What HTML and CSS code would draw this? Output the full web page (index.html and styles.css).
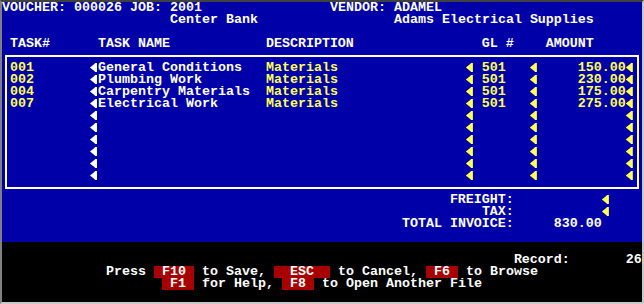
FILE: index.html
```html
<html lang="en">
  <head>
    <meta charset="UTF-8" />
    <title>Voucher Entry</title>
    <link rel="stylesheet" href="styles.css">
  </head>

  <body>
    <div class="screen">
      <div class="main">
        <div class="head">
          <div>VOUCHER: 000026 JOB: 2001</div>
          <div>VENDOR: ADAMEL</div>
          <div class="job">Center Bank</div>
          <div class="vendor">Adams Electrical Supplies</div>
        </div>

        <div class="cols hdr">
          <span>TASK#</span><span></span><span>TASK NAME</span><span>DESCRIPTION</span>
          <span></span><span class="gl">GL #</span><span></span><span class="amt">AMOUNT</span><span></span>
        </div>

        <div class="box">
          <div class="cols">
            <span class="y">001</span><i class="arr"></i><span>General Conditions</span><span class="y">Materials</span>
            <i class="arr y"></i><span class="gl y">501</span><i class="arr y"></i><span class="amt y">150.00</span><i class="arr y"></i>
          </div>
          <div class="cols">
            <span class="y">002</span><i class="arr"></i><span>Plumbing Work</span><span class="y">Materials</span>
            <i class="arr y"></i><span class="gl y">501</span><i class="arr y"></i><span class="amt y">230.00</span><i class="arr y"></i>
          </div>
          <div class="cols">
            <span class="y">004</span><i class="arr"></i><span>Carpentry Materials</span><span class="y">Materials</span>
            <i class="arr y"></i><span class="gl y">501</span><i class="arr y"></i><span class="amt y">175.00</span><i class="arr y"></i>
          </div>
          <div class="cols">
            <span class="y">007</span><i class="arr"></i><span>Electrical Work</span><span class="y">Materials</span>
            <i class="arr y"></i><span class="gl y">501</span><i class="arr y"></i><span class="amt y">275.00</span><i class="arr y"></i>
          </div>
          <div class="cols">
            <span></span><i class="arr"></i><span></span><span></span>
            <i class="arr y"></i><span></span><i class="arr y"></i><span></span><i class="arr y"></i>
          </div>
          <div class="cols">
            <span></span><i class="arr"></i><span></span><span></span>
            <i class="arr y"></i><span></span><i class="arr y"></i><span></span><i class="arr y"></i>
          </div>
          <div class="cols">
            <span></span><i class="arr"></i><span></span><span></span>
            <i class="arr y"></i><span></span><i class="arr y"></i><span></span><i class="arr y"></i>
          </div>
          <div class="cols">
            <span></span><i class="arr"></i><span></span><span></span>
            <i class="arr y"></i><span></span><i class="arr y"></i><span></span><i class="arr y"></i>
          </div>
          <div class="cols">
            <span></span><i class="arr"></i><span></span><span></span>
            <i class="arr y"></i><span></span><i class="arr y"></i><span></span><i class="arr y"></i>
          </div>
          <div class="cols">
            <span></span><i class="arr"></i><span></span><span></span>
            <i class="arr y"></i><span></span><i class="arr y"></i><span></span><i class="arr y"></i>
          </div>
        </div>

        <div class="totals">
          <span class="label">FREIGHT:</span><span></span><i class="arr y"></i>
          <span class="label">TAX:</span><span></span><i class="arr y"></i>
          <span class="label">TOTAL INVOICE:</span><span class="value">830.00</span><span></span>
        </div>
      </div>

      <div class="foot">
        <div class="row"></div>
        <div class="row record">Record:       26</div>
        <div class="row press">Press <span class="key"> F10 </span> to Save, <span class="key">  ESC  </span> to Cancel, <span class="key"> F6 </span> to Browse</div>
        <div class="row help"><span class="key"> F1 </span> for Help, <span class="key"> F8 </span> to Open Another File</div>
        <div class="row"></div>
      </div>
    </div>
  </body>
</html>
```

FILE: styles.css
```css
body {
  margin: 0;
  background-color: #c8c8c8;
}

.screen {
  width: 640px;
  height: 300px;
  border-style: solid;
  border-width: 2px;
  border-color: #404040 #c8c8c8 #c8c8c8 #808080;
  font-family: "Liberation Mono", "DejaVu Sans Mono", monospace;
  font-weight: bold;
  font-size: 13.333px;
  line-height: 12px;
  color: #ffffff;
}

.main {
  height: 240px;
  background-color: #0000a8;
}

.foot {
  height: 60px;
  background-color: #000000;
}

.y {
  color: #ffff54;
}

/* top two lines: voucher / vendor */
.head {
  display: grid;
  grid-template-columns: 41ch 1fr;
  margin-bottom: 12px;
}
.head .job {
  padding-left: 21ch;
}
.head .vendor {
  padding-left: 8ch;
}

/* task table columns, col 1 .. col 78 */
.cols {
  display: grid;
  grid-template-columns: 10ch 1ch 21ch 25ch 1ch 7ch 1ch 11ch 1ch;
  height: 12px;
  white-space: nowrap;
}
.cols .gl {
  padding-left: 1ch;
}
.cols .amt {
  text-align: right;
}
.hdr {
  padding-left: 1ch;
}
.hdr .amt {
  text-align: left;
  padding-left: 1ch;
}

.box {
  margin: 5px 3px;
  border: 2px solid #ffffff;
  padding: 5px 3px;
  height: 120px;
}

.arr {
  display: block;
  width: 8px;
  height: 12px;
  background-color: currentColor;
  clip-path: polygon(0 46%, 62% 12%, 62% 8%, 88% 8%, 88% 84%, 62% 84%, 62% 80%);
}

.totals {
  display: grid;
  grid-template-columns: 64ch 11ch 1ch;
  grid-auto-rows: 12px;
}
.totals .label,
.totals .value {
  text-align: right;
}

.row {
  height: 12px;
  white-space: pre;
}
.record {
  padding-left: 64ch;
}
.press {
  padding-left: 13ch;
}
.help {
  padding-left: 20ch;
}
.key {
  display: inline-block;
  height: 12px;
  background-color: #a80000;
}
```
